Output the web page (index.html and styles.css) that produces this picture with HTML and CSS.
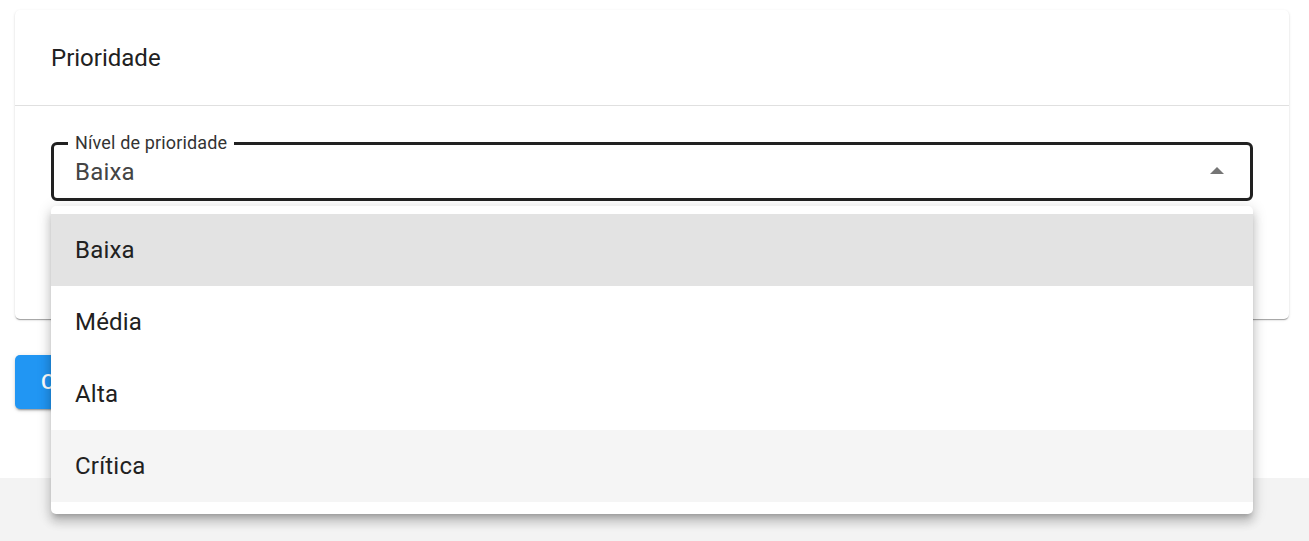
FILE: index.html
```html
<!DOCTYPE html>
<html lang="pt">
<head>
<meta charset="utf-8">
<title>Prioridade</title>
<link rel="stylesheet" href="styles.css">
</head>
<body>
<main class="page">
  <section class="card">
    <header class="card-header">Prioridade</header>
    <div class="card-body">
      <div class="select">
        <span class="select-label">Nível de prioridade</span>
        <div class="select-value">Baixa</div>
        <svg class="select-arrow" width="14" height="7" viewBox="0 0 14 7"><path d="M0 7 L7 0 L14 7 Z" fill="#757575"/></svg>
        <ul class="menu">
          <li class="menu-item selected">Baixa</li>
          <li class="menu-item">Média</li>
          <li class="menu-item">Alta</li>
          <li class="menu-item hover">Crítica</li>
        </ul>
      </div>
    </div>
  </section>
  <div class="actions">
    <button class="btn">Confirmar</button>
  </div>
</main>
<footer class="footer"></footer>
</body>
</html>
```

FILE: styles.css
```css
* { box-sizing: border-box; }
html, body { margin: 0; padding: 0; }
body {
  font-family: Roboto, "Noto Sans", Arial, sans-serif;
  color: #212121;
  background: #f3f3f3;
}
.page {
  background: #fff;
  height: 478px;
  padding: 10px 20px 0 15px;
}
.card {
  background: #fff;
  border-radius: 5px;
  box-shadow: 0 2px 1px -1px rgba(0,0,0,.2), 0 1px 1px 0 rgba(0,0,0,.14), 0 1px 3px 0 rgba(0,0,0,.12);
}
.card-header {
  font-size: 24px;
  line-height: 32px;
  padding: 32px 36px 31px;
  border-bottom: 1px solid #e0e0e0;
}
.card-body {
  padding: 36px 36px 118px;
}
.select {
  position: relative;
  height: 59px;
  border: 3px solid #212121;
  border-radius: 6px;
  display: flex;
  align-items: center;
  padding: 0 0 0 21px;
}
.select-label {
  position: absolute;
  left: 14px;
  top: -11px;
  background: #fff;
  padding: 0 7px 0 7px;
  font-size: 18px;
  line-height: 18px;
  color: #333;
  letter-spacing: 0.15px;
}
.select-value {
  flex: 1;
  font-size: 24px;
  line-height: 28px;
  color: #444;
  letter-spacing: 0.2px;
}
.select-arrow {
  margin-right: 26px;
  margin-top: -3px;
}
.menu {
  position: absolute;
  left: -3px;
  right: -3px;
  top: 61px;
  margin: 0;
  padding: 8px 0 12px;
  list-style: none;
  background: #fff;
  border-radius: 5px;
  box-shadow: 0 5px 5px -3px rgba(0,0,0,.2), 0 8px 10px 1px rgba(0,0,0,.14), 0 3px 14px 2px rgba(0,0,0,.12);
  z-index: 10;
}
.menu-item {
  height: 72px;
  display: flex;
  align-items: center;
  padding: 0 24px;
  font-size: 24px;
  letter-spacing: 0.2px;
  color: #212121;
}
.menu-item.selected { background: #e3e3e3; }
.menu-item.hover { background: #f5f5f5; }
.actions { margin-top: 36px; }
.btn {
  height: 54px;
  padding: 0 26px;
  background: #2196f3;
  color: #fff;
  border: 0;
  border-radius: 5px;
  font-family: Roboto, Arial, sans-serif;
  font-size: 21px;
  font-weight: 500;
  letter-spacing: 0.6px;
  text-transform: uppercase;
  box-shadow: 0 3px 1px -2px rgba(0,0,0,.2), 0 2px 2px 0 rgba(0,0,0,.14), 0 1px 5px 0 rgba(0,0,0,.12);
}
.footer { height: 63px; background: #f3f3f3; }
```
